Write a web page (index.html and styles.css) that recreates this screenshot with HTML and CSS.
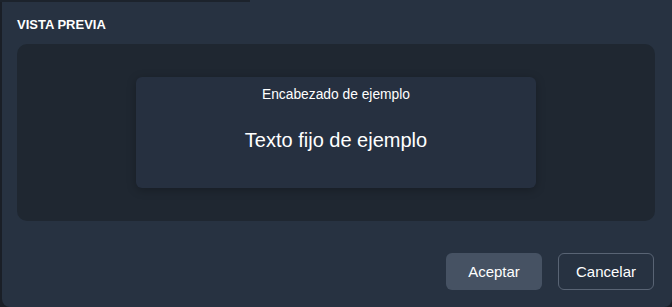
FILE: index.html
```html
<!DOCTYPE html>
<html lang="es">
<head>
    <meta charset="UTF-8">
    <meta name="viewport" content="width=device-width, initial-scale=1.0">
    <title>Vista previa</title>
    <link rel="stylesheet" href="styles.css">
</head>
<body>
    <div class="dialog">
        <div class="top-line"></div>
        <h2 class="title">VISTA PREVIA</h2>
        <div class="preview">
            <div class="card">
                <div class="card-header">Encabezado de ejemplo</div>
                <div class="card-text">Texto fijo de ejemplo</div>
            </div>
        </div>
        <div class="actions">
            <button class="btn primary">Aceptar</button>
            <button class="btn outline">Cancelar</button>
        </div>
    </div>
</body>
</html>
```

FILE: styles.css
```css
html, body {
    margin: 0;
    padding: 0;
    background-color: #1a1f27;
}

body {
    font-family: "Liberation Sans", Arial, sans-serif;
    color: #ffffff;
}

.dialog {
    position: relative;
    margin-left: 2px;
    width: 670px;
    height: 307px;
    background-color: #273241;
    border-radius: 0 0 8px 8px;
    box-sizing: border-box;
    padding: 0 17px 0 15px;
}

.top-line {
    position: absolute;
    top: 0;
    left: -2px;
    width: 250px;
    height: 2px;
    background-color: #1c232c;
}

.title {
    margin: 0;
    padding-top: 17px;
    font-size: 13px;
    font-weight: bold;
    line-height: 15px;
}

.preview {
    margin-top: 12px;
    height: 177px;
    background-color: #1f2731;
    border-radius: 10px;
    display: flex;
    justify-content: center;
    align-items: center;
}

.card {
    width: 400px;
    height: 111px;
    background-color: #263040;
    border-radius: 6px;
    box-shadow: 0 2px 10px rgba(0, 0, 0, 0.25);
    text-align: center;
}

.card-header {
    padding-top: 10px;
    font-size: 13.8px;
    line-height: 15px;
}

.card-text {
    margin-top: 26px;
    font-size: 20px;
    line-height: 24px;
}

.actions {
    display: flex;
    justify-content: flex-end;
    gap: 16px;
    margin-top: 32px;
    margin-right: 1px;
}

.btn {
    width: 96px;
    height: 37px;
    border-radius: 6px;
    font-family: "Liberation Sans", Arial, sans-serif;
    font-size: 15px;
    color: #ffffff;
    cursor: pointer;
}

.primary {
    background-color: #465263;
    border: none;
}

.outline {
    background-color: transparent;
    border: 1px solid #596474;
}
```
